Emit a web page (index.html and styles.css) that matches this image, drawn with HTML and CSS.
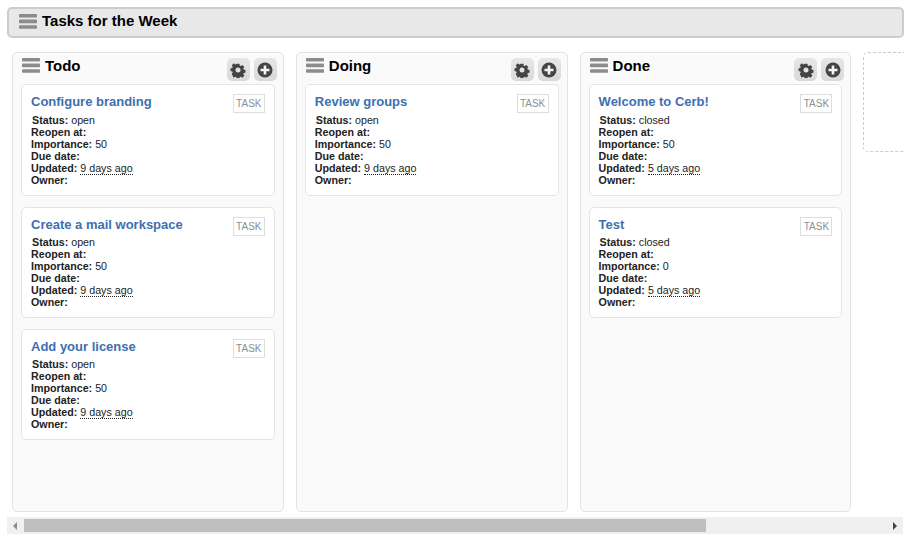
FILE: index.html
```html
<!DOCTYPE html>
<html lang="en">
<head>
  <meta charset="UTF-8">
  <title>Tasks for the Week</title>
  <link rel="stylesheet" href="styles.css">
</head>
<body>
  <svg class="defs" width="0" height="0">
    <symbol id="menu" viewBox="0 0 18 15">
      <rect y="0" width="18" height="3.6" rx=".8"/>
      <rect y="5.6" width="18" height="3.6" rx=".8"/>
      <rect y="11.2" width="18" height="3.6" rx=".8"/>
    </symbol>
    <symbol id="gear" viewBox="0 0 16 16">
      <path d="M6.300 .8h3.400l.4 2.100 1.200.5 1.800-1.200 2.400 2.400-1.200 1.800.5 1.200 2.100.4v3.400l-2.100.4-.5 1.200 1.200 1.800-2.400 2.400-1.800-1.200-1.200.5-.4 2.100H6.300l-.4-2.100-1.200-.5-1.800 1.200L.5 12.800l1.200-1.800-.5-1.200-2.100-.4V6.000l2.100-.4.5-1.200L.5 2.600 2.900.2l1.800 1.200 1.200-.5z" transform="translate(1.300 1.200) scale(.84)"/>
      <circle cx="8" cy="8" r="2.500" fill="#e2e2e2"/>
    </symbol>
    <symbol id="plus" viewBox="0 0 16 16">
      <circle cx="8" cy="8" r="7.500"/>
      <path d="M6.700 3.500h2.600v3.200h3.200v2.600H9.300v3.200H6.700V9.300H3.500V6.700h3.200z" fill="#f2f5f8"/>
    </symbol>
  </svg>

  <div class="page-title">
    <svg class="menu-icon"><use href="#menu"/></svg>
    <h1>Tasks for the Week</h1>
  </div>

  <div class="board">
    <div class="column">
      <div class="column-head">
        <svg class="menu-icon"><use href="#menu"/></svg>
        <h2>Todo</h2>
        <div class="column-buttons">
          <button type="button"><svg><use href="#gear"/></svg></button>
          <button type="button"><svg><use href="#plus"/></svg></button>
        </div>
      </div>
      <div class="card">
        <span class="tag">TASK</span>
        <a class="card-title">Configure branding</a>
        <div class="fields">
          <div><b>Status:</b> open</div>
          <div><b>Reopen at:</b></div>
          <div><b>Importance:</b> 50</div>
          <div><b>Due date:</b></div>
          <div><b>Updated:</b> <abbr>9 days ago</abbr></div>
          <div><b>Owner:</b></div>
        </div>
      </div>
      <div class="card">
        <span class="tag">TASK</span>
        <a class="card-title">Create a mail workspace</a>
        <div class="fields">
          <div><b>Status:</b> open</div>
          <div><b>Reopen at:</b></div>
          <div><b>Importance:</b> 50</div>
          <div><b>Due date:</b></div>
          <div><b>Updated:</b> <abbr>9 days ago</abbr></div>
          <div><b>Owner:</b></div>
        </div>
      </div>
      <div class="card">
        <span class="tag">TASK</span>
        <a class="card-title">Add your license</a>
        <div class="fields">
          <div><b>Status:</b> open</div>
          <div><b>Reopen at:</b></div>
          <div><b>Importance:</b> 50</div>
          <div><b>Due date:</b></div>
          <div><b>Updated:</b> <abbr>9 days ago</abbr></div>
          <div><b>Owner:</b></div>
        </div>
      </div>
    </div>

    <div class="column">
      <div class="column-head">
        <svg class="menu-icon"><use href="#menu"/></svg>
        <h2>Doing</h2>
        <div class="column-buttons">
          <button type="button"><svg><use href="#gear"/></svg></button>
          <button type="button"><svg><use href="#plus"/></svg></button>
        </div>
      </div>
      <div class="card">
        <span class="tag">TASK</span>
        <a class="card-title">Review groups</a>
        <div class="fields">
          <div><b>Status:</b> open</div>
          <div><b>Reopen at:</b></div>
          <div><b>Importance:</b> 50</div>
          <div><b>Due date:</b></div>
          <div><b>Updated:</b> <abbr>9 days ago</abbr></div>
          <div><b>Owner:</b></div>
        </div>
      </div>
    </div>

    <div class="column">
      <div class="column-head">
        <svg class="menu-icon"><use href="#menu"/></svg>
        <h2>Done</h2>
        <div class="column-buttons">
          <button type="button"><svg><use href="#gear"/></svg></button>
          <button type="button"><svg><use href="#plus"/></svg></button>
        </div>
      </div>
      <div class="card">
        <span class="tag">TASK</span>
        <a class="card-title">Welcome to Cerb!</a>
        <div class="fields">
          <div><b>Status:</b> closed</div>
          <div><b>Reopen at:</b></div>
          <div><b>Importance:</b> 50</div>
          <div><b>Due date:</b></div>
          <div><b>Updated:</b> <abbr>5 days ago</abbr></div>
          <div><b>Owner:</b></div>
        </div>
      </div>
      <div class="card">
        <span class="tag">TASK</span>
        <a class="card-title">Test</a>
        <div class="fields">
          <div><b>Status:</b> closed</div>
          <div><b>Reopen at:</b></div>
          <div><b>Importance:</b> 0</div>
          <div><b>Due date:</b></div>
          <div><b>Updated:</b> <abbr>5 days ago</abbr></div>
          <div><b>Owner:</b></div>
        </div>
      </div>
    </div>

    <div class="column-add"></div>
  </div>

  <div class="scrollbar">
    <svg class="arrow arrow-left" viewBox="0 0 4 8"><path d="M4 0v8L0 4z"/></svg>
    <div class="scroll-track"><div class="scroll-thumb"></div></div>
    <svg class="arrow arrow-right" viewBox="0 0 4 8"><path d="M0 0v8l4-4z"/></svg>
  </div>
</body>
</html>
```

FILE: styles.css
```css
html, body {
  overflow: hidden;
}
body {
  font-family: "Liberation Sans", Arial, sans-serif;
  font-size: 10.7px;
  line-height: 12px;
  color: #222;
  margin: 7px 10px 0 7px;
  background-color: #fff;
}
.defs {
  position: absolute;
}
.page-title {
  display: flex;
  align-items: center;
  gap: 5px;
  height: 31px;
  box-sizing: border-box;
  padding: 0 0 2px 10px;
  background-color: #e8e8e8;
  border: 2px solid #ccc;
  border-radius: 5px;
}
h1 {
  margin: 0 0 2px;
  font-size: 15px;
  color: #000;
}
.menu-icon {
  flex: none;
  width: 18px;
  height: 15px;
  fill: #8c8c8c;
}
.board {
  display: flex;
  align-items: flex-start;
  gap: 12px;
  margin-top: 14px;
  padding-left: 5px;
  height: 465px;
  box-sizing: border-box;
  overflow: hidden;
}
.column {
  flex: none;
  width: 271.8px;
  height: 460px;
  box-sizing: border-box;
  padding: 0 8px;
  background-color: #fafafa;
  border: 1px solid #e4e4e4;
  border-radius: 5px;
}
.column-head {
  display: flex;
  gap: 5px;
  height: 31.4px;
  padding: 5px 0 0 1px;
  box-sizing: border-box;
}
h2 {
  margin: 0;
  font-size: 15px;
  line-height: 15px;
  color: #000;
}
.column-buttons {
  display: flex;
  gap: 4px;
  margin: 0 -2px 0 auto;
}
.column-buttons button {
  width: 23px;
  height: 23px;
  padding: 0;
  display: flex;
  align-items: center;
  justify-content: center;
  border: none;
  border-radius: 5px;
  background: linear-gradient(#e6e6e6, #d9d9d9);
}
.column-buttons svg {
  width: 16px;
  height: 16px;
  fill: #444;
}
.card {
  height: 111.4px;
  box-sizing: border-box;
  margin-bottom: 10.9px;
  padding: 9px 9px 0;
  background-color: #fff;
  border: 1px solid #e4e4e4;
  border-radius: 5px;
}
.card-title {
  display: block;
  font-size: 13px;
  line-height: 15px;
  font-weight: bold;
  color: #3e6fb0;
}
.tag {
  float: right;
  width: 32px;
  height: 19px;
  box-sizing: border-box;
  border: 1px solid #ddd;
  font-size: 10px;
  line-height: 17px;
  text-align: center;
  color: #8a8f99;
}
.fields {
  margin-top: 4.2px;
}
.fields div:first-child {
  padding-left: 1px;
}
abbr {
  border-bottom: 1px dotted #222;
}
.column-add {
  flex: none;
  width: 100px;
  height: 100px;
  box-sizing: border-box;
  border: 1px dashed #ccc;
  border-radius: 5px;
}
.scrollbar {
  display: flex;
  align-items: center;
  height: 17px;
  margin-right: 1px;
  background-color: #f0f0f0;
}
.arrow {
  flex: none;
  width: 4px;
  height: 8px;
}
.arrow-left {
  margin: 0 7px 0 6px;
  fill: #8c8c8c;
}
.arrow-right {
  margin: 0 6px 0 6px;
  fill: #444;
}
.scroll-track {
  flex: 1;
}
.scroll-thumb {
  width: 79%;
  height: 13px;
  background-color: #bfbfbf;
}
```
